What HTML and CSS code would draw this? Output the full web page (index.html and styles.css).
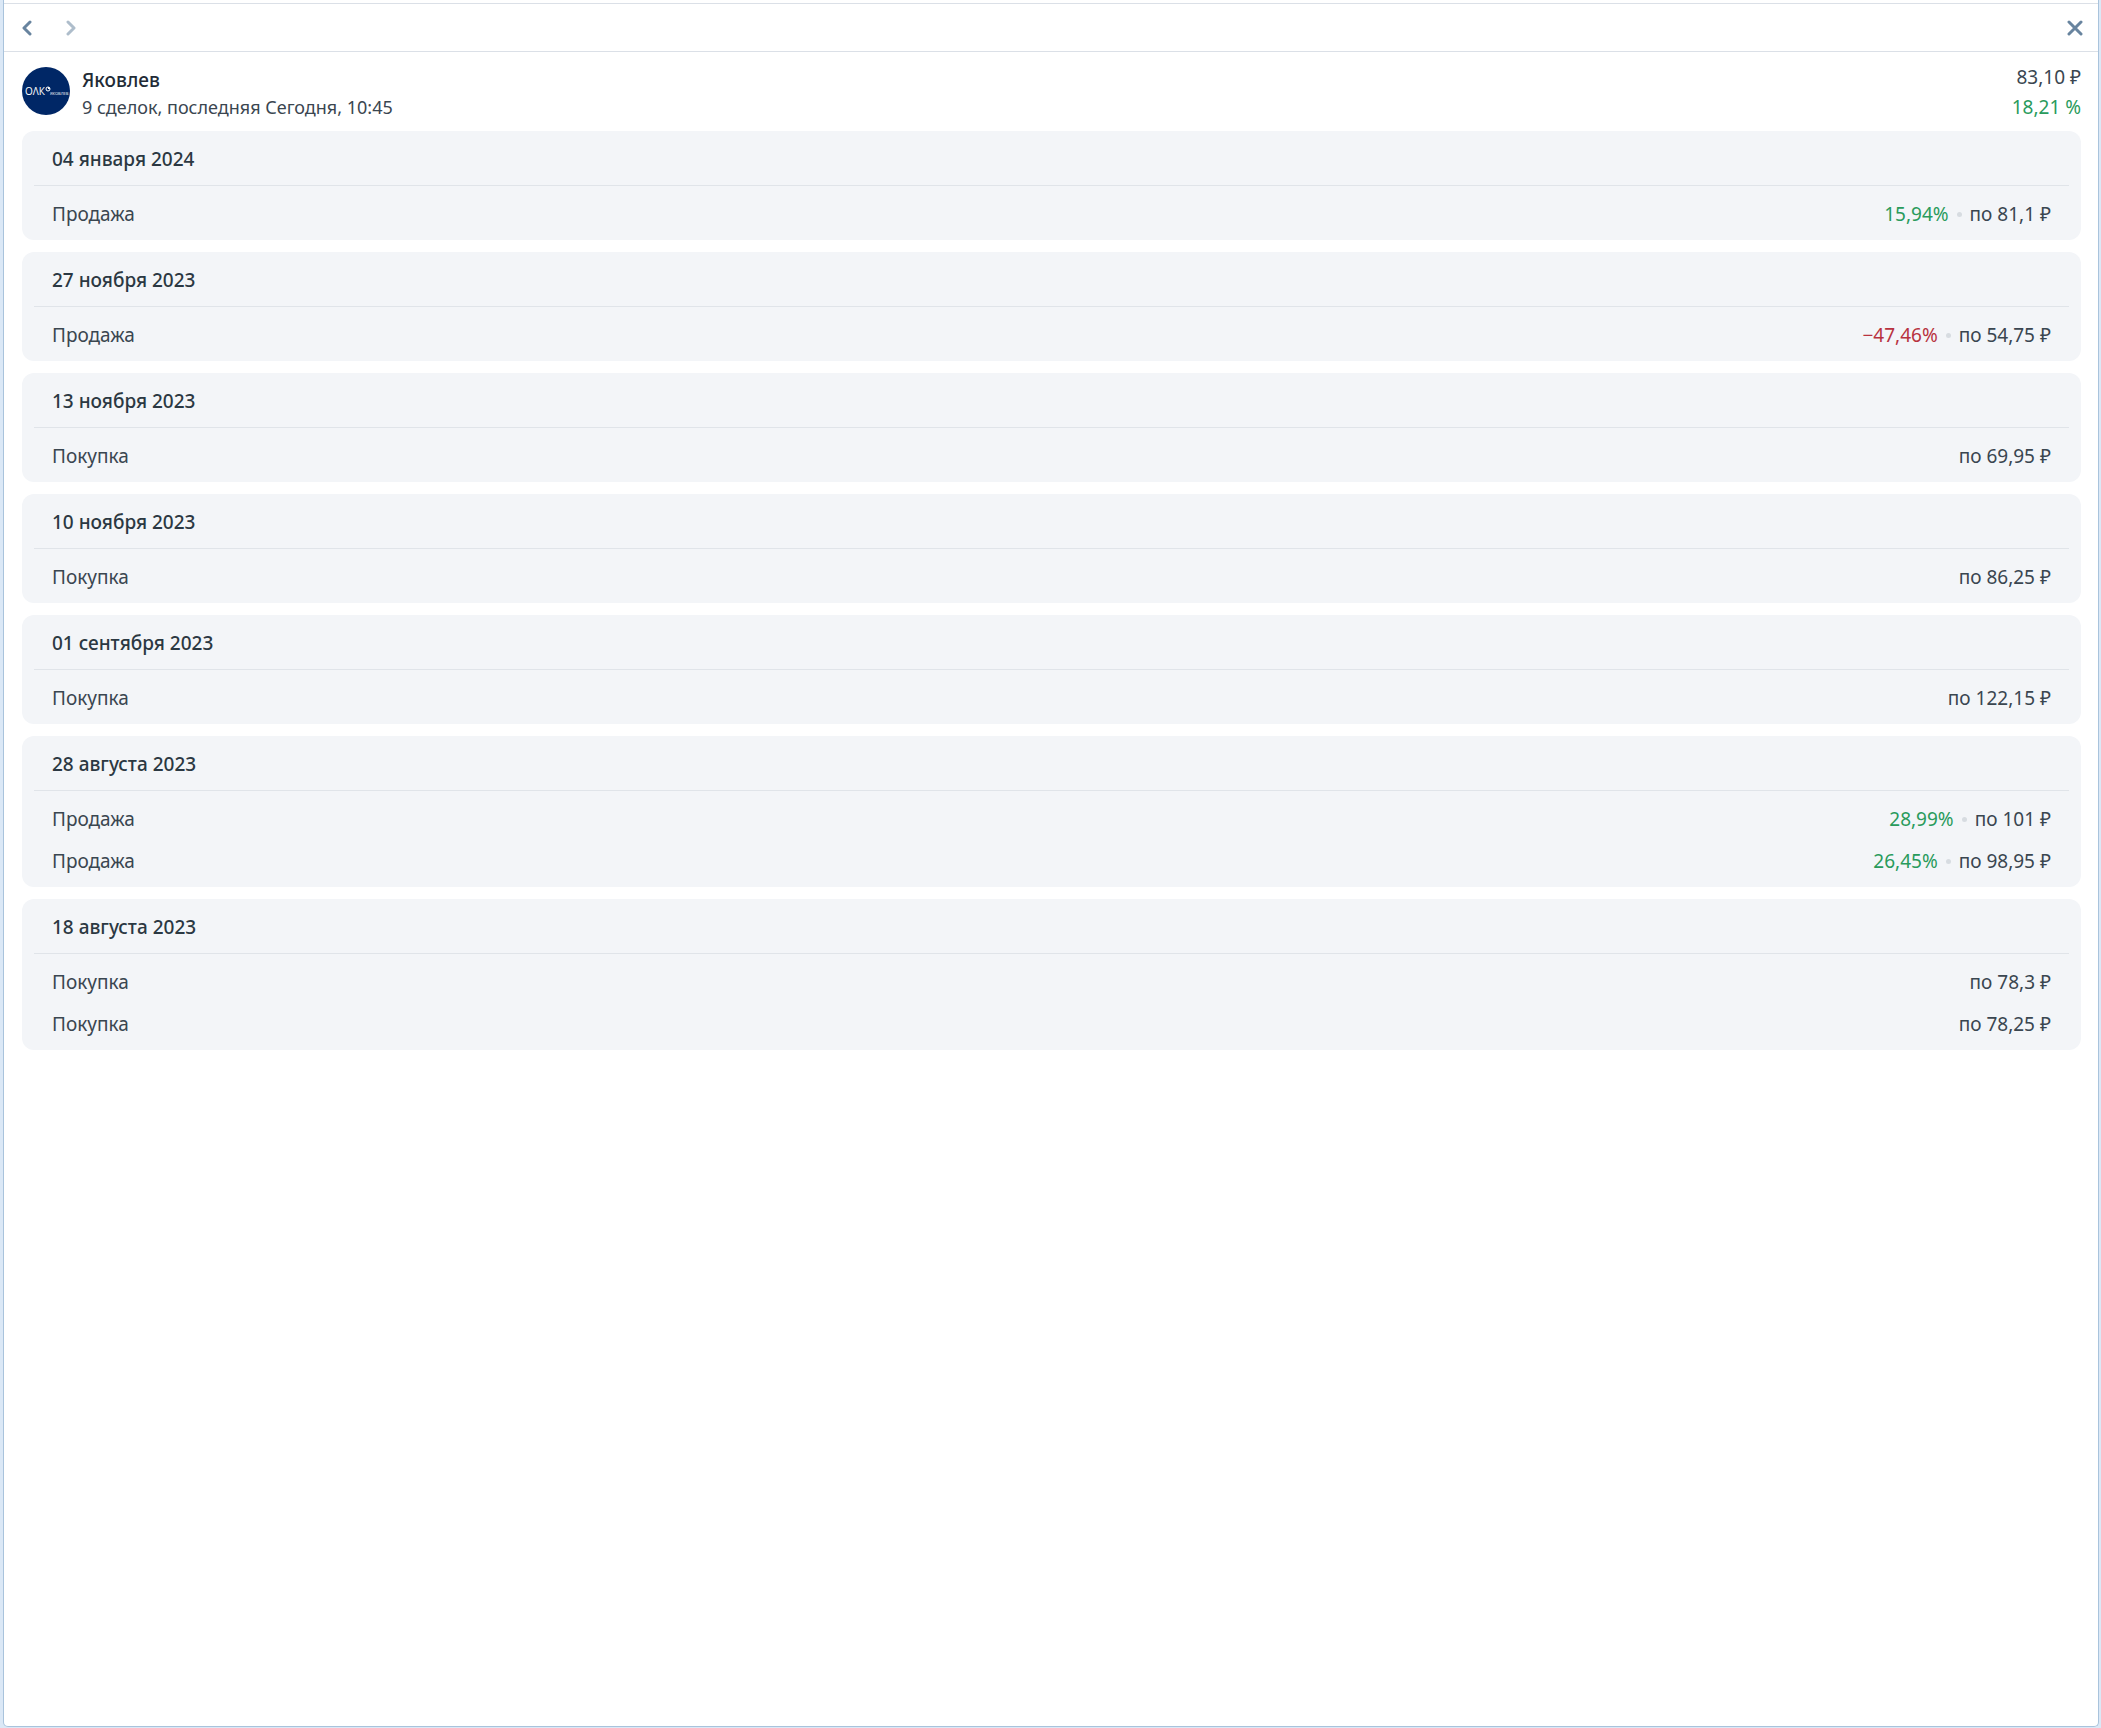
FILE: index.html
```html
<!DOCTYPE html>
<html lang="ru">
<head>
    <meta charset="UTF-8">
    <meta name="viewport" content="width=device-width, initial-scale=1.0">
    <title>Яковлев</title>
    <link rel="stylesheet" href="styles.css">
</head>
<body>
    <div class="panel">
        <nav class="toolbar">
            <button type="button" aria-label="Назад">
                <svg width="16" height="16" viewBox="0 0 16 16"><path d="M11 2L5 8l6 6"/></svg>
            </button>
            <button type="button" class="forward" aria-label="Вперёд">
                <svg width="16" height="16" viewBox="0 0 16 16"><path d="M5 2l6 6-6 6"/></svg>
            </button>
            <button type="button" class="close" aria-label="Закрыть">
                <svg width="16" height="16" viewBox="0 0 16 16"><path d="M2 2l12 12M14 2L2 14"/></svg>
            </button>
        </nav>

        <header class="asset">
            <svg class="logo" width="48" height="48" viewBox="0 0 48 48">
                <circle cx="24" cy="24" r="24" fill="#002766"/>
                <text x="3" y="28" font-size="10">ОΛК</text>
                <circle cx="26" cy="22" r="2" fill="none" stroke="#fff"/>
                <path d="M26 22v-2a2 2 0 0 1 2 2z" fill="#fff"/>
                <text x="28" y="28" font-size="4">ЯКОВЛЕВ</text>
            </svg>
            <div class="asset-info">
                <h1>Яковлев</h1>
                <p>9 сделок, последняя Сегодня, 10:45</p>
            </div>
            <div class="asset-price">
                <div>83,10 ₽</div>
                <div class="up">18,21 %</div>
            </div>
        </header>

        <main class="deals">
            <section class="card">
                <h2>04 января 2024</h2>
                <ul>
                    <li><span>Продажа</span><span class="value"><span class="up">15,94%</span><i class="dot"></i>по 81,1 ₽</span></li>
                </ul>
            </section>
            <section class="card">
                <h2>27 ноября 2023</h2>
                <ul>
                    <li><span>Продажа</span><span class="value"><span class="down">−47,46%</span><i class="dot"></i>по 54,75 ₽</span></li>
                </ul>
            </section>
            <section class="card">
                <h2>13 ноября 2023</h2>
                <ul>
                    <li><span>Покупка</span><span class="value">по 69,95 ₽</span></li>
                </ul>
            </section>
            <section class="card">
                <h2>10 ноября 2023</h2>
                <ul>
                    <li><span>Покупка</span><span class="value">по 86,25 ₽</span></li>
                </ul>
            </section>
            <section class="card">
                <h2>01 сентября 2023</h2>
                <ul>
                    <li><span>Покупка</span><span class="value">по 122,15 ₽</span></li>
                </ul>
            </section>
            <section class="card">
                <h2>28 августа 2023</h2>
                <ul>
                    <li><span>Продажа</span><span class="value"><span class="up">28,99%</span><i class="dot"></i>по 101 ₽</span></li>
                    <li><span>Продажа</span><span class="value"><span class="up">26,45%</span><i class="dot"></i>по 98,95 ₽</span></li>
                </ul>
            </section>
            <section class="card">
                <h2>18 августа 2023</h2>
                <ul>
                    <li><span>Покупка</span><span class="value">по 78,3 ₽</span></li>
                    <li><span>Покупка</span><span class="value">по 78,25 ₽</span></li>
                </ul>
            </section>
        </main>
    </div>
</body>
</html>
```
FILE: styles.css
```css
* {
    box-sizing: border-box;
}
body {
    display: flex;
    min-height: 100vh;
    margin: 0;
    padding: 0 2px 1px 3px;
    background-color: #dbe8f6;
    color: #3a4650;
    font-family: "Noto Sans", "Open Sans", sans-serif;
    font-size: 19px;
    line-height: 30px;
}
h1, h2, p, ul {
    margin: 0;
    padding: 0;
}
h1, h2 {
    color: #2b3842;
    font-size: 19px;
    font-weight: 500;
}
.panel {
    flex: 1;
    padding-top: 3px;
    background: white;
    border: 1px solid #a9c3dc;
    border-top: 0;
    border-radius: 0 0 5px 5px;
}
.toolbar {
    display: flex;
    align-items: center;
    gap: 12px;
    height: 49px;
    padding: 0 7px;
    border-top: 1px solid #dbe0e7;
    border-bottom: 1px solid #dbe0e7;
}
.toolbar button {
    display: flex;
    align-items: center;
    justify-content: center;
    width: 32px;
    height: 32px;
    padding: 0;
    border: 0;
    background: none;
    cursor: pointer;
}
.toolbar svg {
    fill: none;
    stroke: #68849f;
    stroke-width: 3;
    stroke-linecap: round;
    stroke-linejoin: round;
}
.toolbar .forward svg {
    stroke: #aebdcb;
}
.toolbar .close {
    margin-left: auto;
}
.asset {
    display: flex;
    align-items: flex-start;
    gap: 12px;
    height: 79px;
    padding: 10px 17px 0 18px;
}
.logo {
    margin-top: 5px;
}
.logo text {
    fill: white;
    font-family: "Open Sans", sans-serif;
}
.asset-info {
    padding-top: 5px;
    line-height: 27px;
}
.asset-info h1 {
    color: #222b36;
}
.asset-info p {
    font-size: 18px;
}
.asset-price {
    margin-left: auto;
    text-align: right;
}
.deals {
    display: flex;
    flex-direction: column;
    gap: 12px;
    padding: 0 17px 17px 18px;
}
.card {
    padding: 0 12px;
    background-color: #f3f5f8;
    border-radius: 12px;
}
.card h2 {
    padding: 13px 18px 11px;
    border-bottom: 1px solid #e0e4e9;
}
.card ul {
    padding: 7px 18px 5px;
    list-style: none;
}
.card li {
    display: flex;
    justify-content: space-between;
    padding: 6px 0;
}
.value {
    display: flex;
    align-items: center;
}
.dot {
    width: 5px;
    height: 5px;
    margin: 0 8px;
    border-radius: 50%;
    background-color: #d7dce1;
}
.up {
    color: #299b5c;
}
.down {
    color: #b8323f;
}
```
